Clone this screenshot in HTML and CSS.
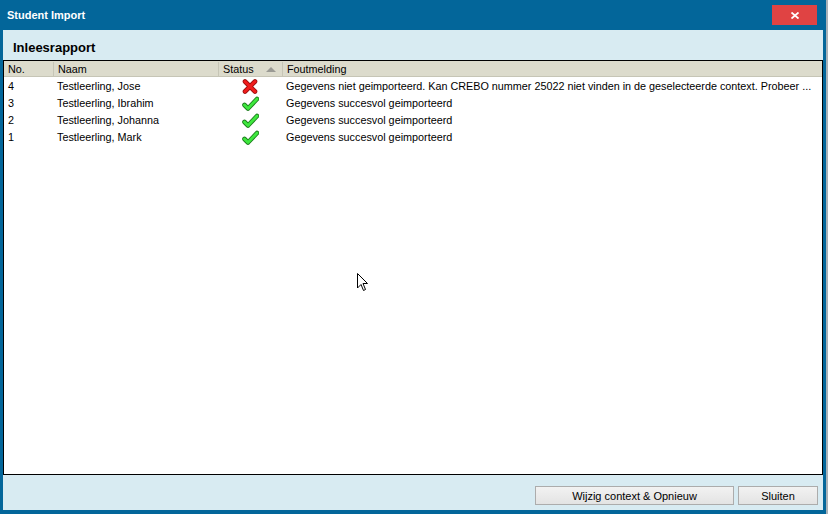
FILE: index.html
```html
<!DOCTYPE html>
<html lang="nl">
<head>
    <meta charset="UTF-8">
    <title>Student Import</title>
    <link rel="stylesheet" href="styles.css">
</head>
<body>
    <div class="window">
        <div class="titlebar">
            <span class="title">Student Import</span>
            <button class="close-btn">
                <svg width="8" height="7" viewBox="0 0 8 7"><path d="M0.5 0.5 L7.5 6.5 M7.5 0.5 L0.5 6.5" stroke="#fff" stroke-width="1.8"/></svg>
            </button>
        </div>
        <div class="panel">
            <h2 class="panel-title">Inleesrapport</h2>
            <div class="grid">
                <div class="grid-head">
                    <div class="col col-no">No.</div>
                    <div class="col col-name">Naam</div>
                    <div class="col col-status">Status <span class="sort-arrow"></span></div>
                    <div class="col col-msg">Foutmelding</div>
                </div>
                <div class="grid-row">
                    <div class="col col-no">4</div>
                    <div class="col col-name">Testleerling, Jose</div>
                    <div class="col col-status">
                        <svg class="icon" width="16" height="15" viewBox="0 0 16 15">
                            <path d="M3 2.5 L13 12.5 M13 2.5 L3 12.5" stroke="#9c1010" stroke-width="4.6" stroke-linecap="round"/>
                            <path d="M3 2.5 L13 12.5 M13 2.5 L3 12.5" stroke="#f01c1c" stroke-width="3" stroke-linecap="round"/>
                        </svg>
                    </div>
                    <div class="col col-msg">Gegevens niet geimporteerd. Kan CREBO nummer 25022 niet vinden in de geselecteerde context. Probeer ...</div>
                </div>
                <div class="grid-row">
                    <div class="col col-no">3</div>
                    <div class="col col-name">Testleerling, Ibrahim</div>
                    <div class="col col-status">
                        <svg class="icon" width="17" height="15" viewBox="0 0 17 15">
                            <path d="M2.5 9 L6 12.5 L15 3" fill="none" stroke="#1d7d1d" stroke-width="4.6" stroke-linecap="round" stroke-linejoin="round"/>
                            <path d="M2.5 9 L6 12.5 L15 3" fill="none" stroke="#3ee83e" stroke-width="2.8" stroke-linecap="round" stroke-linejoin="round"/>
                        </svg>
                    </div>
                    <div class="col col-msg">Gegevens succesvol geimporteerd</div>
                </div>
                <div class="grid-row">
                    <div class="col col-no">2</div>
                    <div class="col col-name">Testleerling, Johanna</div>
                    <div class="col col-status">
                        <svg class="icon" width="17" height="15" viewBox="0 0 17 15">
                            <path d="M2.5 9 L6 12.5 L15 3" fill="none" stroke="#1d7d1d" stroke-width="4.6" stroke-linecap="round" stroke-linejoin="round"/>
                            <path d="M2.5 9 L6 12.5 L15 3" fill="none" stroke="#3ee83e" stroke-width="2.8" stroke-linecap="round" stroke-linejoin="round"/>
                        </svg>
                    </div>
                    <div class="col col-msg">Gegevens succesvol geimporteerd</div>
                </div>
                <div class="grid-row">
                    <div class="col col-no">1</div>
                    <div class="col col-name">Testleerling, Mark</div>
                    <div class="col col-status">
                        <svg class="icon" width="17" height="15" viewBox="0 0 17 15">
                            <path d="M2.5 9 L6 12.5 L15 3" fill="none" stroke="#1d7d1d" stroke-width="4.6" stroke-linecap="round" stroke-linejoin="round"/>
                            <path d="M2.5 9 L6 12.5 L15 3" fill="none" stroke="#3ee83e" stroke-width="2.8" stroke-linecap="round" stroke-linejoin="round"/>
                        </svg>
                    </div>
                    <div class="col col-msg">Gegevens succesvol geimporteerd</div>
                </div>

                <svg class="cursor" width="12" height="19" viewBox="0 0 12 19">
                    <path d="M0.5 0.5 L0.5 15 L4 11.5 L6.5 17.5 L8.5 16.5 L6 10.5 L10.5 10.5 Z" fill="#fff" stroke="#000" stroke-width="1"/>
                </svg>
            </div>
            <div class="footer">
                <button class="btn btn-wide">Wijzig context &amp; Opnieuw</button>
                <button class="btn">Sluiten</button>
            </div>
        </div>
    </div>
</body>
</html>
```

FILE: styles.css
```css
body {
    margin: 0;
    background: #a9b2b8;
    font-family: Tahoma, "Liberation Sans", Arial, sans-serif;
    font-size: 11px;
    color: #000;
}
.window {
    width: 826px;
    height: 514px;
    box-sizing: border-box;
    background: #03669a;
    padding: 0 3px 4px 3px;
    display: flex;
    flex-direction: column;
}
.titlebar {
    height: 30px;
    display: flex;
    align-items: flex-start;
    justify-content: space-between;
    flex-shrink: 0;
}
.title {
    color: #fff;
    font-weight: bold;
    font-size: 11px;
    margin: 9px 0 0 4px;
}
.close-btn {
    width: 45px;
    height: 20px;
    margin: 5px 6px 0 0;
    background: #e04343;
    border: none;
    padding: 0;
    display: flex;
    align-items: center;
    justify-content: center;
}
.panel {
    flex: 1;
    background: #d8ebf2;
    display: flex;
    flex-direction: column;
}
.panel-title {
    margin: 0;
    height: 30px;
    box-sizing: border-box;
    padding: 10px 0 0 10px;
    font-size: 13px;
    font-weight: bold;
}
.grid {
    position: relative;
    flex: 1;
    background: #fff;
    border: 1px solid #000;
    overflow: hidden;
    font-size: 10.8px;
}
.grid-head, .grid-row {
    display: grid;
    grid-template-columns: 49px 165px 64px 1fr;
}
.grid-head {
    height: 16px;
    box-sizing: border-box;
    padding-top: 1px;
    background: #dcdbcc;
    border-bottom: 1px solid #c6c5b6;
    line-height: 15px;
}
.grid-head .col {
    border-left: 1px solid #c6c5b6;
}
.grid-head .col:first-child {
    border-left: none;
}
.grid-row {
    height: 17px;
    box-sizing: border-box;
    padding-top: 1px;
    line-height: 16px;
}
.col {
    padding-left: 4px;
    white-space: nowrap;
    overflow: hidden;
}
.grid-head .col-status {
    display: flex;
    align-items: center;
    justify-content: space-between;
    padding-right: 6px;
}
.sort-arrow {
    width: 0;
    height: 0;
    border-left: 5px solid transparent;
    border-right: 5px solid transparent;
    border-bottom: 5px solid #9a9a94;
}
.grid-row .col-status {
    display: flex;
    align-items: center;
    justify-content: center;
    padding-left: 0;
}
.icon {
    display: block;
}
.cursor {
    position: absolute;
    left: 353px;
    top: 212px;
}
.footer {
    height: 35px;
    flex-shrink: 0;
    display: flex;
    justify-content: flex-end;
    align-items: flex-start;
    gap: 4px;
    padding: 11px 5px 0 0;
    box-sizing: border-box;
}
.btn {
    height: 19px;
    width: 80px;
    font-family: Tahoma, "Liberation Sans", Arial, sans-serif;
    font-size: 11px;
    color: #000;
    background: linear-gradient(#f2f2f2, #e3e3e3);
    border: 1px solid #acacac;
    padding: 0;
}
.btn-wide {
    width: 199px;
}
```
